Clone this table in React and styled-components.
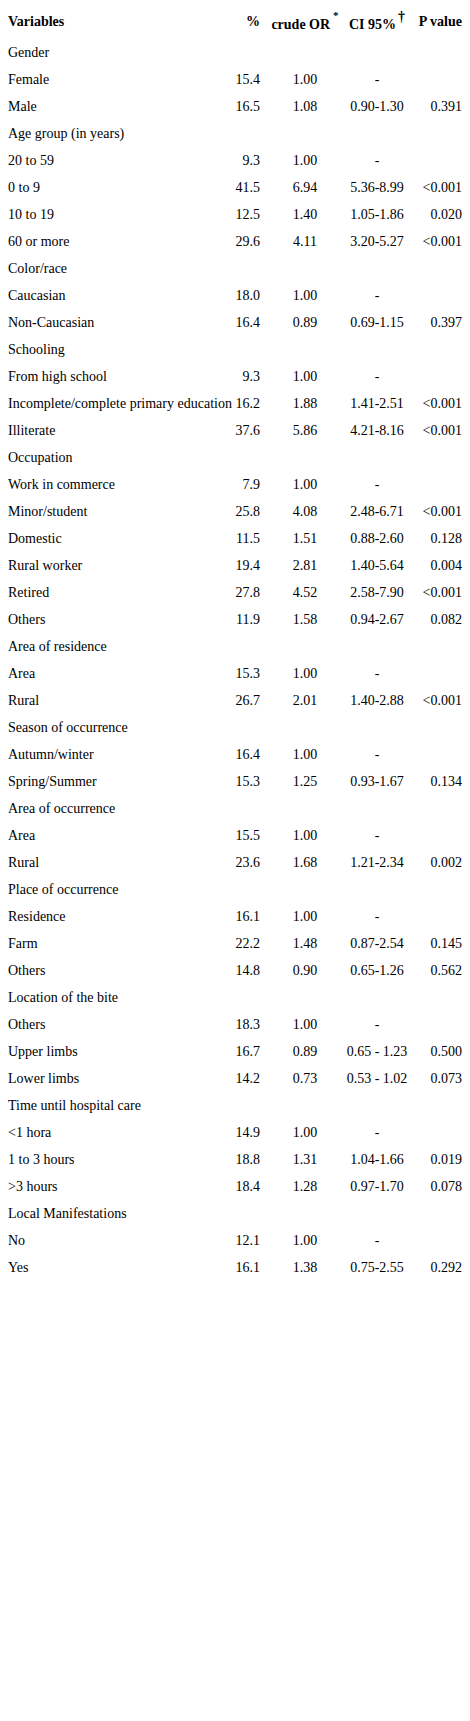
import React from "react";
import styled, { createGlobalStyle } from "styled-components";

const Global = createGlobalStyle`
  html, body { margin: 0; padding: 0; background: #fff; }
  body { font-family: "Liberation Serif", "Times New Roman", serif; color: #000; }
`;

const Page = styled.div`
  width: 470px;
  min-height: 1721px;
  box-sizing: border-box;
  padding: 8px 8px 0 8px;
  background: #fff;
`;

const Table = styled.div`
  display: grid;
  grid-template-columns: 227px 25px 90px 54px 58px;
  width: 454px;
`;

const Row = styled.div`
  display: contents;
`;

const Cell = styled.div`
  height: ${(p) => (p.$head ? "31px" : "27px")};
  display: flex;
  align-items: center;
  justify-content: ${(p) =>
    p.$align === "right" ? "flex-end" : p.$align === "center" ? "center" : "flex-start"};
  white-space: nowrap;
  font-size: 14px;
  font-weight: ${(p) => (p.$head ? 700 : 400)};
  padding-bottom: ${(p) => (p.$head ? (p.$shift ? "0" : "4px") : "0")};
  padding-top: ${(p) => (p.$shift ? "3px" : "0")};
  box-sizing: border-box;
`;

const Sup = styled.sup`
  font-size: ${(p) => (p.$big ? "14px" : "11px")};
  font-weight: 700;
  line-height: 0;
  position: relative;
  top: ${(p) => (p.$big ? "-8px" : "-10px")};
  vertical-align: baseline;
  margin-left: ${(p) => (p.$big ? "2px" : "3px")};
`;

const rows = [
  ["Gender"],
  ["Female", "15.4", "1.00", "-", ""],
  ["Male", "16.5", "1.08", "0.90-1.30", "0.391"],
  ["Age group (in years)"],
  ["20 to 59", "9.3", "1.00", "-", ""],
  ["0 to 9", "41.5", "6.94", "5.36-8.99", "<0.001"],
  ["10 to 19", "12.5", "1.40", "1.05-1.86", "0.020"],
  ["60 or more", "29.6", "4.11", "3.20-5.27", "<0.001"],
  ["Color/race"],
  ["Caucasian", "18.0", "1.00", "-", ""],
  ["Non-Caucasian", "16.4", "0.89", "0.69-1.15", "0.397"],
  ["Schooling"],
  ["From high school", "9.3", "1.00", "-", ""],
  ["Incomplete/complete primary education", "16.2", "1.88", "1.41-2.51", "<0.001"],
  ["Illiterate", "37.6", "5.86", "4.21-8.16", "<0.001"],
  ["Occupation"],
  ["Work in commerce", "7.9", "1.00", "-", ""],
  ["Minor/student", "25.8", "4.08", "2.48-6.71", "<0.001"],
  ["Domestic", "11.5", "1.51", "0.88-2.60", "0.128"],
  ["Rural worker", "19.4", "2.81", "1.40-5.64", "0.004"],
  ["Retired", "27.8", "4.52", "2.58-7.90", "<0.001"],
  ["Others", "11.9", "1.58", "0.94-2.67", "0.082"],
  ["Area of residence"],
  ["Area", "15.3", "1.00", "-", ""],
  ["Rural", "26.7", "2.01", "1.40-2.88", "<0.001"],
  ["Season of occurrence"],
  ["Autumn/winter", "16.4", "1.00", "-", ""],
  ["Spring/Summer", "15.3", "1.25", "0.93-1.67", "0.134"],
  ["Area of occurrence"],
  ["Area", "15.5", "1.00", "-", ""],
  ["Rural", "23.6", "1.68", "1.21-2.34", "0.002"],
  ["Place of occurrence"],
  ["Residence", "16.1", "1.00", "-", ""],
  ["Farm", "22.2", "1.48", "0.87-2.54", "0.145"],
  ["Others", "14.8", "0.90", "0.65-1.26", "0.562"],
  ["Location of the bite"],
  ["Others", "18.3", "1.00", "-", ""],
  ["Upper limbs", "16.7", "0.89", "0.65 - 1.23", "0.500"],
  ["Lower limbs", "14.2", "0.73", "0.53 - 1.02", "0.073"],
  ["Time until hospital care"],
  ["<1 hora", "14.9", "1.00", "-", ""],
  ["1 to 3 hours", "18.8", "1.31", "1.04-1.66", "0.019"],
  [">3 hours", "18.4", "1.28", "0.97-1.70", "0.078"],
  ["Local Manifestations"],
  ["No", "12.1", "1.00", "-", ""],
  ["Yes", "16.1", "1.38", "0.75-2.55", "0.292"],
];

const aligns = ["left", "right", "center", "center", "right"];

export default function App() {
  return (
    <>
      <Global />
      <Page>
        <Table>
          <Row>
            <Cell $head>Variables</Cell>
            <Cell $head $align="right">%</Cell>
            <Cell $head $shift $align="center">
              crude OR<Sup>*</Sup>
            </Cell>
            <Cell $head $shift $align="center">
              CI 95%<Sup $big>†</Sup>
            </Cell>
            <Cell $head $align="right">P value</Cell>
          </Row>
          {rows.map((r, i) => (
            <Row key={i}>
              {aligns.map((a, j) => (
                <Cell key={j} $align={a}>
                  {r[j] || ""}
                </Cell>
              ))}
            </Row>
          ))}
        </Table>
      </Page>
    </>
  );
}
